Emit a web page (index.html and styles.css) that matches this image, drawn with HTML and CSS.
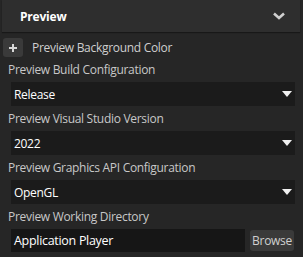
FILE: index.html
```html
<!DOCTYPE html>
<html lang="en">
<head>
    <meta charset="UTF-8">
    <title>Preview</title>
    <link rel="stylesheet" href="styles.css">
</head>
<body>

<div class="panel">
    <div class="panel-header">
        <span class="panel-title">Preview</span>
        <svg class="chevron" width="12" height="8" viewBox="0 0 12 8">
            <path d="M1 1.5 L6 6 L11 1.5" fill="none" stroke="#cfcfcf" stroke-width="2.6"/>
        </svg>
    </div>

    <div class="color-row">
        <button class="add-btn">
            <svg width="10" height="10" viewBox="0 0 10 10">
                <path d="M5 1 V9 M1 5 H9" stroke="#d8d8d8" stroke-width="2"/>
            </svg>
        </button>
        <span class="color-label">Preview Background Color</span>
    </div>

    <div class="field">
        <div class="label">Preview Build Configuration</div>
        <div class="select"><span>Release</span><i class="arrow"></i></div>
    </div>

    <div class="field">
        <div class="label">Preview Visual Studio Version</div>
        <div class="select"><span>2022</span><i class="arrow"></i></div>
    </div>

    <div class="field">
        <div class="label">Preview Graphics API Configuration</div>
        <div class="select"><span>OpenGL</span><i class="arrow"></i></div>
    </div>

    <div class="field">
        <div class="label">Preview Working Directory</div>
        <div class="path-row">
            <div class="path-input">Application Player</div>
            <button class="browse-btn">Browse</button>
        </div>
    </div>
</div>

</body>
</html>
```

FILE: styles.css
```css
* {
    margin: 0;
    padding: 0;
    box-sizing: border-box;
}

body {
    background-color: #262626;
    font-family: "Open Sans", "Noto Sans", sans-serif;
    font-size: 12px;
    letter-spacing: -0.3px;
    color: #c8c8c8;
}

.panel {
    width: 303px;
}

.panel-header {
    display: flex;
    justify-content: space-between;
    align-items: center;
    height: 32px;
    margin: 0 3px 0 2px;
    padding: 0 12px 0 18px;
    background-color: #2e2e2e;
    box-shadow: 0 1px 1px rgba(0, 0, 0, 0.35);
}

.panel-title {
    font-weight: bold;
    font-size: 12px;
    letter-spacing: -0.2px;
    color: #ffffff;
}

.chevron {
    margin-right: 3px;
}

.color-row {
    display: flex;
    align-items: center;
    height: 19px;
    margin-top: 6px;
    padding-left: 3px;
}

.add-btn {
    display: flex;
    align-items: center;
    justify-content: center;
    width: 20px;
    height: 19px;
    border: none;
    border-radius: 3px;
    background-color: #3a3a3a;
}

.color-label {
    margin-left: 9px;
    color: #cfcfcf;
}

.field .label {
    height: 25px;
    line-height: 26px;
    padding-left: 8px;
    color: #c8c8c8;
}

.field:first-of-type .label {
    height: 24px;
}

.select {
    display: flex;
    justify-content: space-between;
    align-items: center;
    height: 24px;
    margin: 0 8px 0 11px;
    padding: 0 3px 0 3px;
    background-color: #1b1b1b;
    color: #ffffff;
}

/* kleines Dreieck rechts */
.arrow {
    width: 0;
    height: 0;
    border-left: 5px solid transparent;
    border-right: 5px solid transparent;
    border-top: 6px solid #f0f0f0;
}

.path-row {
    display: flex;
    align-items: center;
    gap: 5px;
    margin: 0 9px 0 11px;
}

.path-input {
    flex: 1;
    height: 23px;
    line-height: 23px;
    padding-left: 3px;
    background-color: #161616;
    color: #ffffff;
    font-size: 12.5px;
}

.browse-btn {
    width: 44px;
    height: 21px;
    border: none;
    border-radius: 3px;
    background-color: #3a3a3a;
    color: #d0d0d0;
    font-family: inherit;
    font-size: 12px;
    letter-spacing: -0.3px;
}
```
